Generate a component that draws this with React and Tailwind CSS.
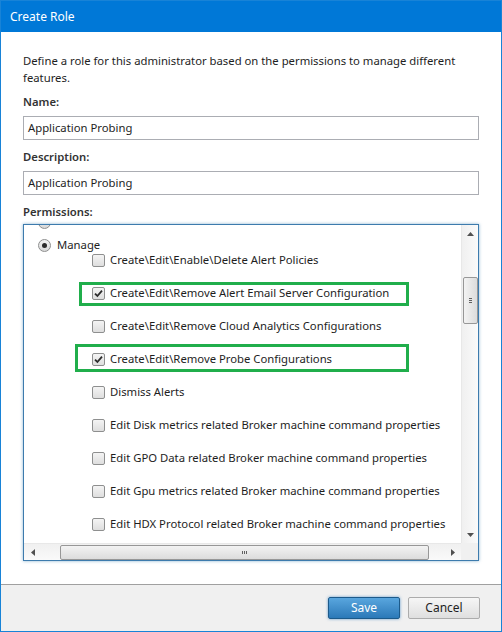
import React from "react";

const permissions = [
  { label: "Create\\Edit\\Enable\\Delete Alert Policies" },
  { label: "Create\\Edit\\Remove Alert Email Server Configuration", checked: true, box: "left-[-13px] top-[-4px] w-[330px] h-[24px]" },
  { label: "Create\\Edit\\Remove Cloud Analytics Configurations" },
  { label: "Create\\Edit\\Remove Probe Configurations", checked: true, box: "left-[-17px] top-[-8px] w-[334px] h-[28px]" },
  { label: "Dismiss Alerts" },
  { label: "Edit Disk metrics related Broker machine command properties" },
  { label: "Edit GPO Data related Broker machine command properties" },
  { label: "Edit Gpu metrics related Broker machine command properties" },
  { label: "Edit HDX Protocol related Broker machine command properties" },
];

const Checkbox = ({ checked }) => (
  <div className="w-[13px] h-[13px] shrink-0 rounded-[2px] border border-[#8e8f8f] bg-gradient-to-b from-[#f4f4f4] to-[#dedede] flex items-center justify-center">
    {checked && (
      <svg width="9" height="9" viewBox="0 0 9 9">
        <path d="M1 4.6 L3.4 7 L8 1.6" fill="none" stroke="#2c2c2c" strokeWidth="1.8" />
      </svg>
    )}
  </div>
);

const Radio = ({ checked }) => (
  <div className="w-[13px] h-[13px] shrink-0 rounded-full border border-[#8e8f8f] bg-gradient-to-b from-[#f2f2f2] to-[#d9d9d9] flex items-center justify-center">
    {checked && <div className="w-[5px] h-[5px] rounded-full bg-[#2a2a2a]" />}
  </div>
);

const Arrow = ({ dir }) => {
  const d = {
    up: "M0 4 L3.5 0 L7 4 Z",
    down: "M0 0 L7 0 L3.5 4 Z",
    left: "M4 0 L4 7 L0 3.5 Z",
    right: "M0 0 L4 3.5 L0 7 Z",
  }[dir];
  const horiz = dir === "left" || dir === "right";
  return (
    <svg width={horiz ? 4 : 7} height={horiz ? 7 : 4} viewBox={horiz ? "0 0 4 7" : "0 0 7 4"}>
      <path d={d} fill="#505050" />
    </svg>
  );
};

const TextBox = ({ value }) => (
  <div className="h-[24px] w-[456px] border border-[#abadb3] bg-white flex items-center pl-[4px] text-[#1e1e1e]">
    {value}
  </div>
);

export default function App() {
  return (
    <div
      className="w-[502px] h-[632px] border border-[#1883d7] flex flex-col bg-white text-[#1e1e1e]"
      style={{ fontFamily: '"Noto Sans", "Open Sans", sans-serif' }}
    >
      {/* title bar */}
      <div className="h-[31px] shrink-0 bg-[#0078d7] text-white text-[12px] pl-[9px] flex items-center">
        Create Role
      </div>

      {/* body */}
      <div className="flex-1 px-[22px] pt-[20px] text-[11.3px]">
        <p className="leading-[17px] w-[456px]">
          Define a role for this administrator based on the permissions to manage different features.
        </p>
        <div className="mt-[7px] leading-[17px] font-semibold text-[#333]">Name:</div>
        <div className="mt-[6px]">
          <TextBox value="Application Probing" />
        </div>
        <div className="mt-[8px] leading-[17px] font-semibold text-[#333]">Description:</div>
        <div className="mt-[6px]">
          <TextBox value="Application Probing" />
        </div>
        <div className="mt-[8px] leading-[17px] font-semibold text-[#333]">Permissions:</div>

        {/* permissions list */}
        <div className="mt-[4px] w-[456px] h-[337px] border border-[#3d7bad] shadow-[0_0_3px_rgba(60,127,177,0.6)] bg-white flex flex-col">
          <div className="flex flex-1 min-h-0">
            <div className="flex-1 overflow-hidden">
              <div className="-mt-[11px] pl-[14px]">
                <div className="h-[16px] flex items-center">
                  <Radio />
                </div>
                <div className="mt-[7px] h-[16px] flex items-center gap-[6px]">
                  <Radio checked />
                  <span>Manage</span>
                </div>
                <div className="pl-[54px]">
                  {permissions.map((p) => (
                    <div key={p.label} className="relative h-[33px]">
                      <div className="h-[14px] flex items-center gap-[5px] whitespace-nowrap">
                        <Checkbox checked={p.checked} />
                        <span>{p.label}</span>
                      </div>
                      {p.box && (
                        <div className={`absolute border-[3px] border-[#20ae4b] ${p.box}`} />
                      )}
                    </div>
                  ))}
                </div>
              </div>
            </div>
            {/* vertical scrollbar */}
            <div className="w-[17px] shrink-0 bg-gradient-to-r from-[#f0f0f0] to-[#fafafa] border-l border-[#e8e8e8] flex flex-col items-center">
              <div className="h-[17px] flex items-center justify-center">
                <Arrow dir="up" />
              </div>
              <div className="mt-[35px] w-[15px] h-[47px] rounded-[2px] border border-[#979797] bg-gradient-to-r from-[#f3f3f3] to-[#dcdcdc] flex flex-col items-center justify-center gap-[1px]">
                <div className="w-[3px] h-px bg-[#606060]" />
                <div className="w-[3px] h-px bg-[#606060]" />
                <div className="w-[3px] h-px bg-[#606060]" />
              </div>
              <div className="flex-1" />
              <div className="h-[17px] flex items-center justify-center">
                <Arrow dir="down" />
              </div>
            </div>
          </div>
          {/* horizontal scrollbar */}
          <div className="h-[17px] shrink-0 flex">
            <div className="flex-1 bg-gradient-to-b from-[#f0f0f0] to-[#fafafa] border-t border-[#e8e8e8] flex items-center">
              <div className="w-[17px] flex items-center justify-center">
                <Arrow dir="left" />
              </div>
              <div className="ml-[19px] w-[369px] h-[15px] rounded-[2px] border border-[#979797] bg-gradient-to-b from-[#f3f3f3] to-[#dcdcdc] flex items-center justify-center gap-[1px]">
                <div className="w-px h-[3px] bg-[#606060]" />
                <div className="w-px h-[3px] bg-[#606060]" />
                <div className="w-px h-[3px] bg-[#606060]" />
              </div>
              <div className="flex-1" />
              <div className="w-[17px] flex items-center justify-center">
                <Arrow dir="right" />
              </div>
            </div>
            <div className="w-[17px] bg-[#f0f0f0]" />
          </div>
        </div>
      </div>

      {/* footer */}
      <div className="h-[47px] shrink-0 border-t border-[#a0a0a0] bg-[#f0f0f0] flex items-start justify-end gap-[8px] pr-[21px] pt-[12px] text-[12px]">
        <button className="w-[72px] h-[22px] rounded-[2px] border border-[#1c5a8a] bg-gradient-to-b from-[#59a6de] to-[#2b79b8] text-white shadow-[0_0_3px_rgba(40,120,190,0.7)]">
          Save
        </button>
        <button className="w-[72px] h-[22px] rounded-[2px] border border-[#acacac] bg-gradient-to-b from-[#f6f6f6] to-[#dfdfdf] text-[#1e1e1e]">
          Cancel
        </button>
      </div>
    </div>
  );
}
